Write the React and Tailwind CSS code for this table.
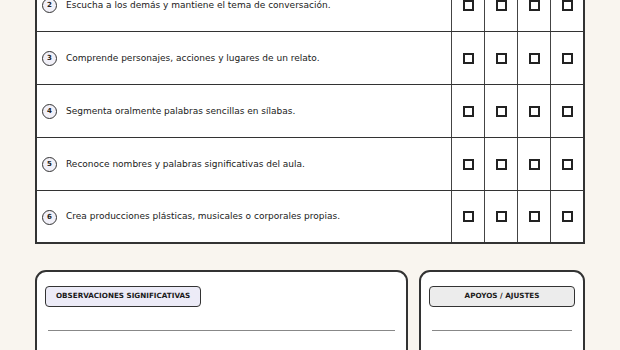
const rows = [
  { n: 2, text: 'Escucha a los demás y mantiene el tema de conversación.' },
  { n: 3, text: 'Comprende personajes, acciones y lugares de un relato.' },
  { n: 4, text: 'Segmenta oralmente palabras sencillas en sílabas.' },
  { n: 5, text: 'Reconoce nombres y palabras significativas del aula.' },
  { n: 6, text: 'Crea producciones plásticas, musicales o corporales propias.' },
];

function CheckCell() {
  return (
    <div className="w-[33px] shrink-0 border-l border-[#444] flex items-center justify-center">
      <span className="block w-[11px] h-[11px] border-2 border-[#222] bg-white" />
    </div>
  );
}

function Row({ n, text, last }) {
  return (
    <div className={`flex ${last ? 'h-[51px]' : 'h-[53px] border-b-[1.5px] border-[#333]'}`}>
      <div className="flex-1 flex items-center gap-[9px] pl-[5px] pt-[1px]">
        <span className="w-[15px] h-[15px] rounded-full border-[1.5px] border-[#333] bg-[#f1f0f8] flex items-center justify-center text-[7px] font-bold text-[#222]">
          {n}
        </span>
        <span className="text-[9px] text-[#1a1a1a]">{text}</span>
      </div>
      <CheckCell />
      <CheckCell />
      <CheckCell />
      <CheckCell />
    </div>
  );
}

export default function App() {
  return (
    <div className="h-[350px] overflow-hidden bg-[#f9f5ef] px-[35px]" style={{ fontFamily: '"DejaVu Sans", sans-serif' }}>
      {/* table is scrolled, first row partly hidden */}
      <div className="-mt-[23px] bg-white border-2 border-[#333]">
        {rows.map((r, i) => (
          <Row key={r.n} n={r.n} text={r.text} last={i === rows.length - 1} />
        ))}
      </div>

      <div className="flex gap-[11px] mt-[26px]">
        <div className="flex-1 h-[140px] bg-white border-2 border-[#333] rounded-[11px] pt-[14px] px-[8px]">
          <div className="flex">
            <div className="flex items-center h-[21px] px-[10px] rounded-[4px] border-[1.5px] border-[#333] bg-[#ecebf7] text-[7.2px] font-bold text-[#1a1a1a]">
              OBSERVACIONES SIGNIFICATIVAS
            </div>
          </div>
          <div className="mt-[23px] mx-[3px] border-t border-[#888]" />
        </div>
        <div className="w-[166px] h-[140px] bg-white border-2 border-[#333] rounded-[11px] pt-[14px] px-[8px]">
          <div className="flex items-center justify-center h-[21px] rounded-[4px] border-[1.5px] border-[#333] bg-[#ececec] text-[7.2px] font-bold text-[#1a1a1a]">
            APOYOS / AJUSTES
          </div>
          <div className="mt-[23px] mx-[3px] border-t border-[#888]" />
        </div>
      </div>
    </div>
  );
}
